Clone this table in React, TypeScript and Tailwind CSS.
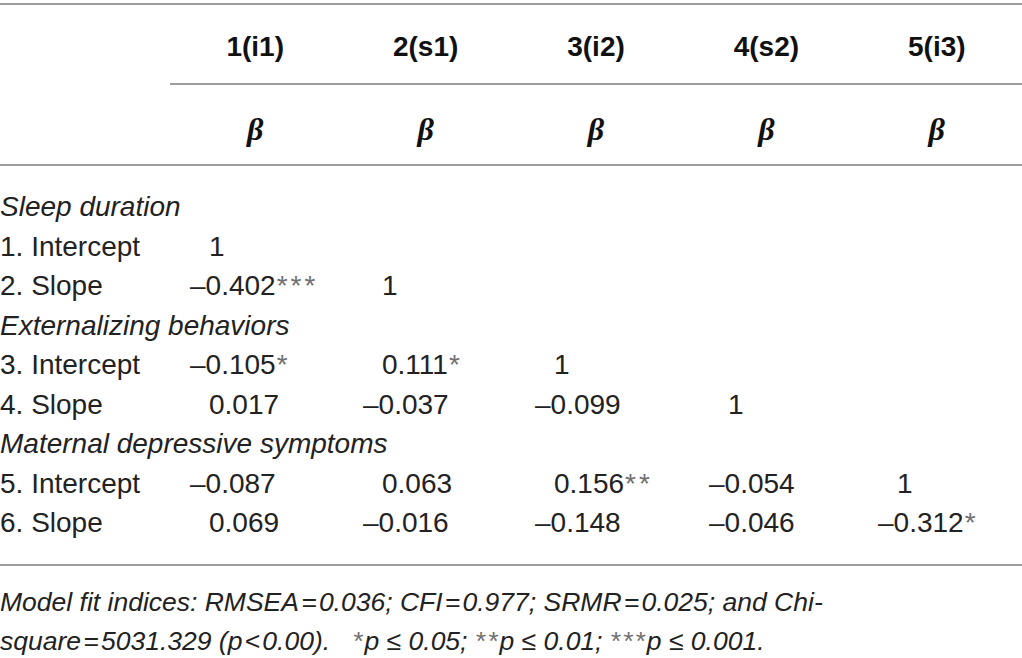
const headers = ['1(i1)', '2(s1)', '3(i2)', '4(s2)', '5(i3)'];

type Row =
  | { kind: 'group'; label: string }
  | { kind: 'data'; label: string; values: string[] };

const rows: Row[] = [
  { kind: 'group', label: 'Sleep duration' },
  { kind: 'data', label: '1. Intercept', values: ['1'] },
  { kind: 'data', label: '2. Slope', values: ['–0.402***', '1'] },
  { kind: 'group', label: 'Externalizing behaviors' },
  { kind: 'data', label: '3. Intercept', values: ['–0.105*', '0.111*', '1'] },
  { kind: 'data', label: '4. Slope', values: ['0.017', '–0.037', '–0.099', '1'] },
  { kind: 'group', label: 'Maternal depressive symptoms' },
  { kind: 'data', label: '5. Intercept', values: ['–0.087', '0.063', '0.156**', '–0.054', '1'] },
  { kind: 'data', label: '6. Slope', values: ['0.069', '–0.016', '–0.148', '–0.046', '–0.312*'] },
];

function Value({ text }: { text: string }) {
  const negative = text.startsWith('–');
  const stars = text.match(/\*+$/)?.[0] ?? '';
  const num = stars ? text.slice(0, -stars.length) : text;
  return (
    <div className={negative ? 'whitespace-nowrap' : 'whitespace-nowrap pl-[19px]'}>
      {num}
      {stars && <span className="pl-[1px] tracking-[3px] text-[#707070]">{stars}</span>}
    </div>
  );
}

function Rule({ indent = false }: { indent?: boolean }) {
  return <div className={indent ? 'ml-[170px] h-[2px] bg-[#9d9d9d]' : 'h-[2px] bg-[#9d9d9d]'} />;
}

export default function App() {
  return (
    <div className="w-[1022px] h-[658px] overflow-hidden bg-white pt-[3px] font-['Liberation_Sans',Arial,sans-serif] text-[28px] text-[#222]">
      <Rule />

      {/* column headers */}
      <div className="grid grid-cols-[170px_repeat(5,1fr)] pt-[22px] pb-[16px] leading-[40px] font-bold text-[#111]">
        <div />
        {headers.map((h) => (
          <div key={h} className="text-center">
            {h}
          </div>
        ))}
      </div>
      <Rule indent />

      <div className="grid grid-cols-[170px_repeat(5,1fr)] pt-[24px] pb-[15px] leading-[40px] font-['Liberation_Serif',serif] text-[32px] font-bold italic text-[#111]">
        <div />
        {headers.map((h) => (
          <div key={h} className="text-center">
            β
          </div>
        ))}
      </div>
      <Rule />

      {/* body */}
      <div className="pt-[21px] pb-[21px]">
        {rows.map((r, i) =>
          r.kind === 'group' ? (
            <div key={i} className="h-[39.5px] leading-[39.5px] italic">
              {r.label}
            </div>
          ) : (
            <div
              key={i}
              className="grid h-[39.5px] grid-cols-[190px_173px_172px_174px_169px_1fr] leading-[39.5px]"
            >
              <div className="whitespace-nowrap">{r.label}</div>
              {r.values.map((v, j) => (
                <Value key={j} text={v} />
              ))}
            </div>
          ),
        )}
      </div>
      <Rule />

      {/* footnote */}
      <div className="pt-[17px] text-[26.5px] leading-[39px] italic">
        <div className="whitespace-nowrap">
          Model fit indices: RMSEA{'\u200a=\u200a'}0.036; CFI{'\u200a=\u200a'}0.977; SRMR{'\u200a=\u200a'}0.025; and Chi-
        </div>
        <div className="whitespace-pre">
          square{'\u200a=\u200a'}5031.329 (p{'\u200a<\u200a'}0.00).{'   '}
          <span className="tracking-[2px] text-[#707070]">*</span>p{' ≤ '}0.05;{' '}
          <span className="tracking-[2px] text-[#707070]">**</span>p{' ≤ '}0.01;{' '}
          <span className="tracking-[2px] text-[#707070]">***</span>p{' ≤ '}0.001.
        </div>
      </div>
    </div>
  );
}
